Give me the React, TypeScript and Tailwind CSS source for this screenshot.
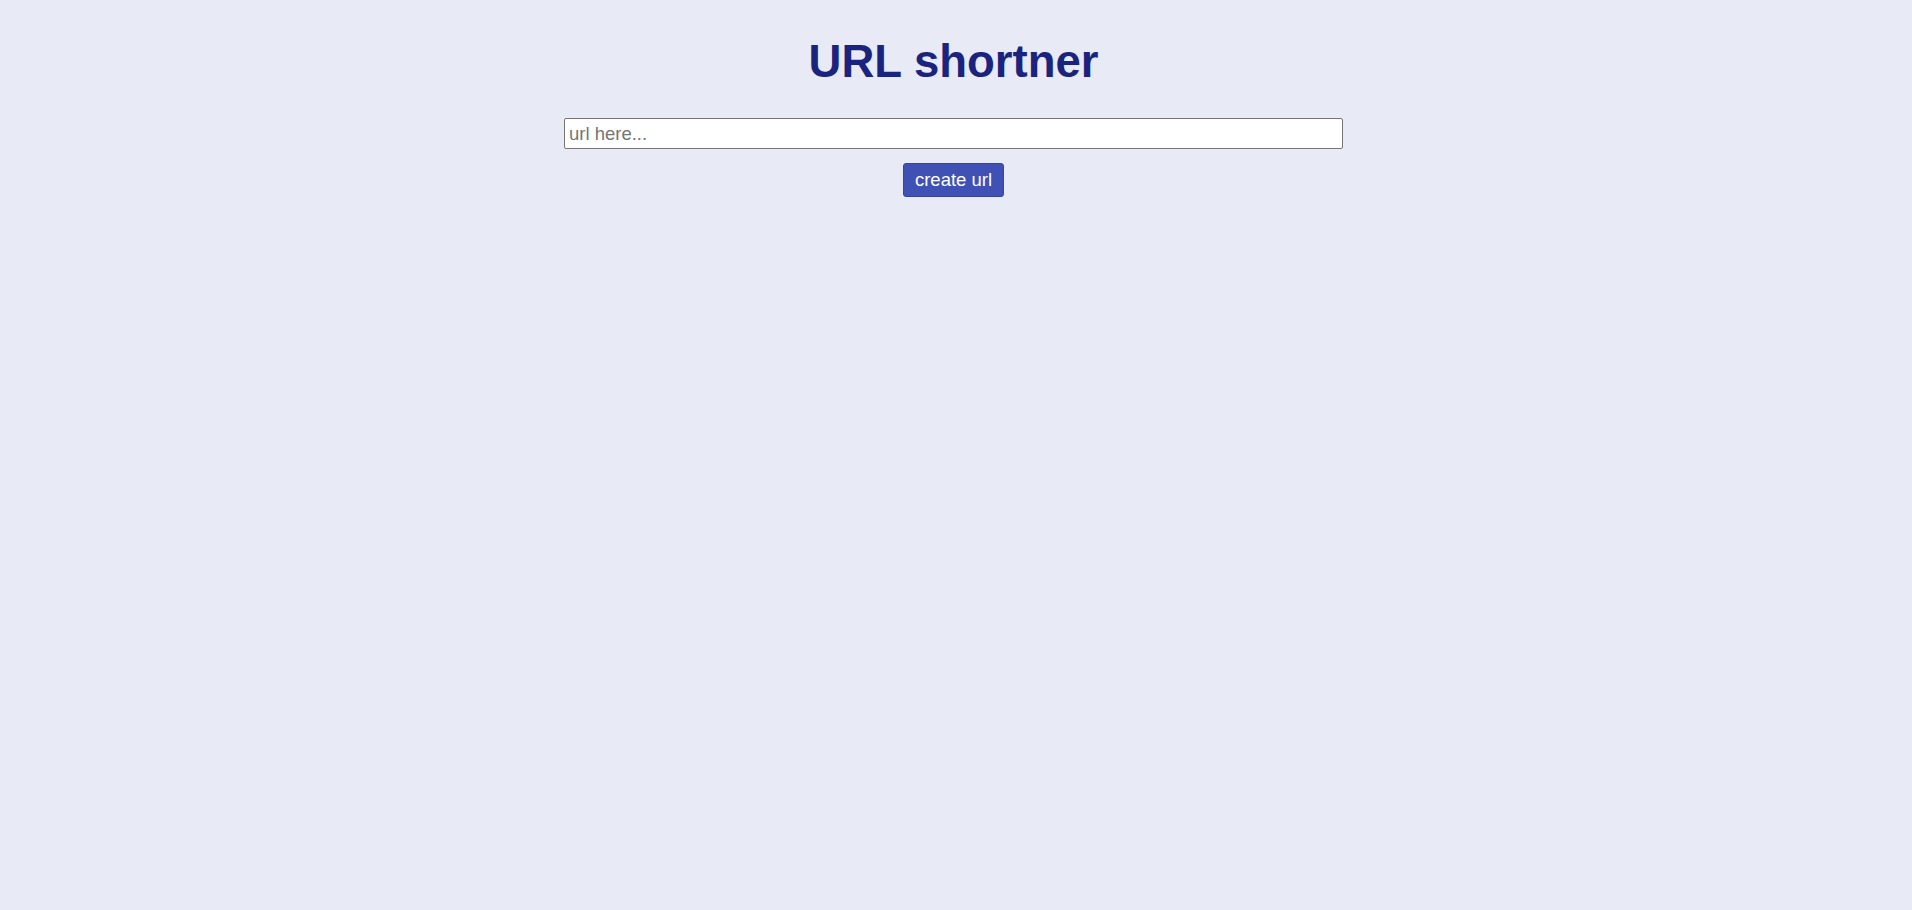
export default function App() {
  return (
    <div
      className="min-h-[910px] w-full bg-[#e8eaf6] flex flex-col items-center pr-[5px]"
      style={{ fontFamily: '"Liberation Sans", Arial, sans-serif' }}
    >
      <h1 className="mt-[39px] text-[45.5px] leading-[46px] font-bold text-[#1a237e]">URL shortner</h1>
      <input
        type="text"
        placeholder="url here..."
        className="mt-[33px] w-[779px] h-[31px] bg-white border border-[#767676] rounded-[2px] px-[4px] text-[18.5px] text-black placeholder:text-[#757575] outline-none"
      />
      <button className="mt-[14px] h-[34px] w-[101px] bg-[#3f51b5] text-white text-[18.5px] rounded-[3px] border border-[#35469f]">
        create url
      </button>
    </div>
  );
}
